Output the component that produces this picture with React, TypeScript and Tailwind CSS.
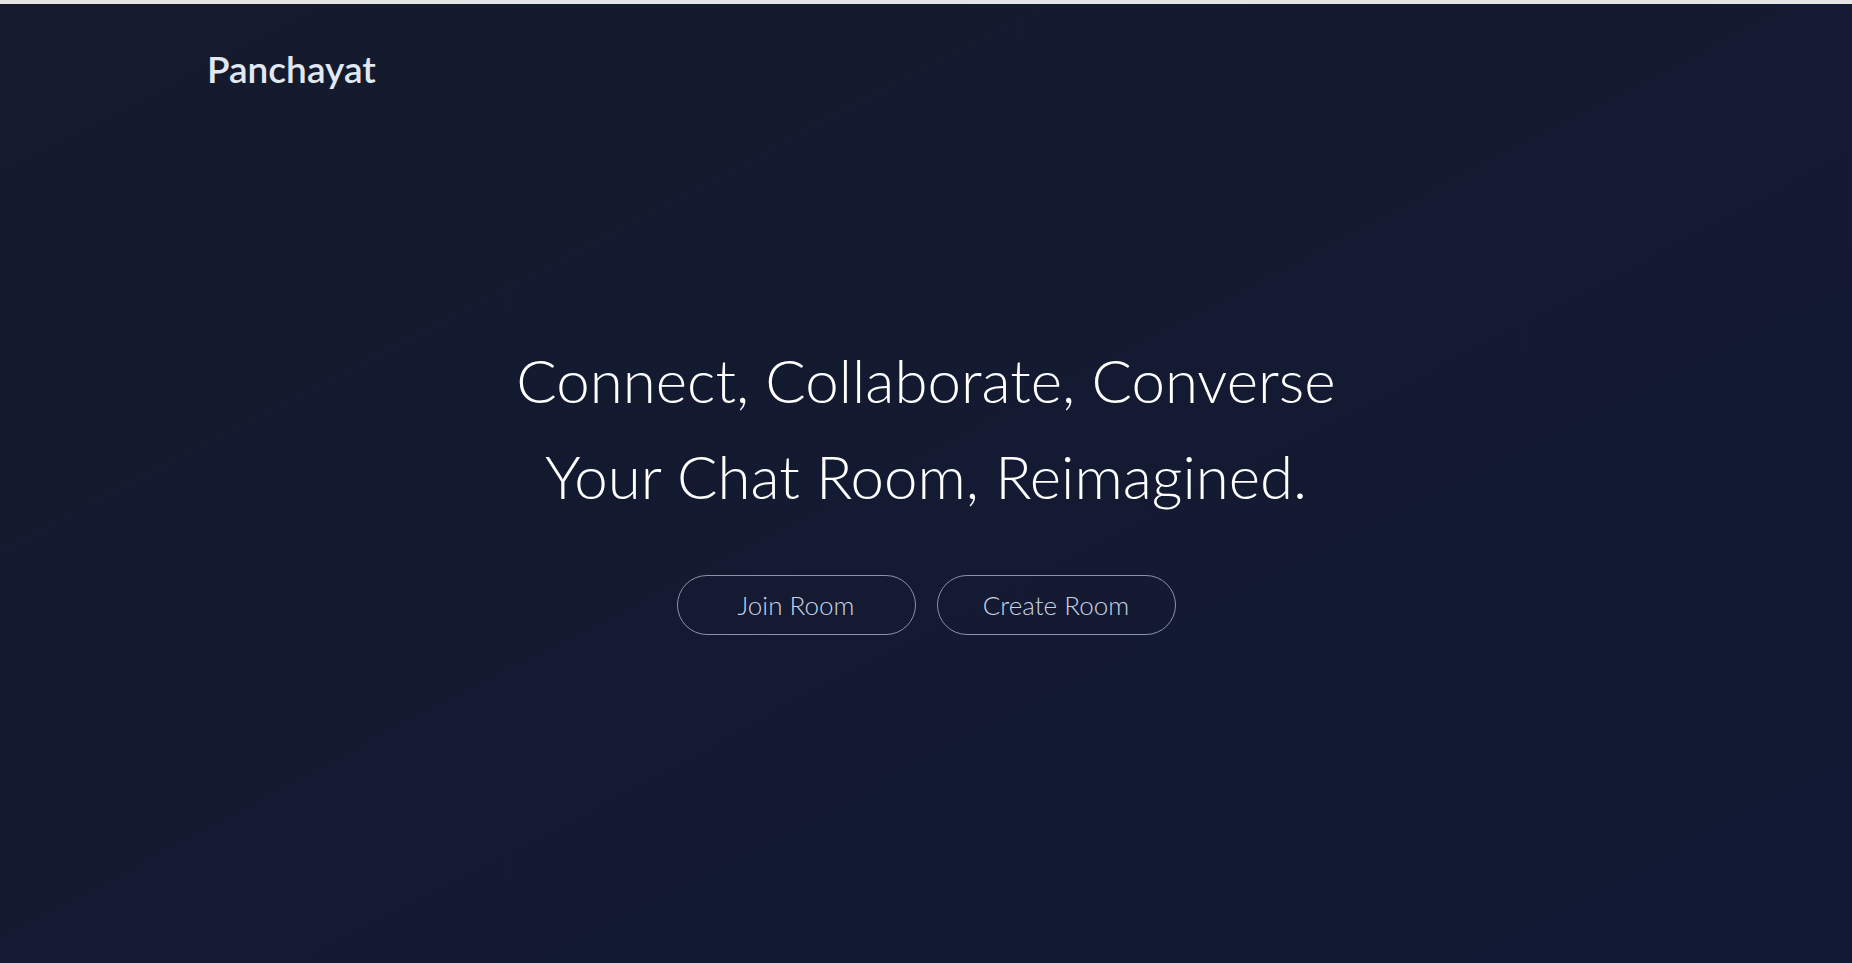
export default function App() {
  return (
    <div className="flex h-screen w-full flex-col overflow-hidden bg-[#141b2f]">
      <div className="h-[4px] w-full shrink-0 bg-[#e4e4e4]" />
      <div className="flex min-h-0 flex-1 flex-col bg-linear-to-br from-[#151b2c] via-[#131a31] to-[#121934]">
        <header className="flex h-[130px] shrink-0 items-center pl-[207px]">
          <span className="font-['Lato',sans-serif] text-[37px] font-semibold text-[#e1e8f2]">
            Panchayat
          </span>
        </header>

        <main className="flex flex-1 flex-col items-center justify-center pb-[130px]">
          <h1 className="text-center font-['Lato',sans-serif] text-[60px] font-light leading-[1.6] text-white">
            Connect, Collaborate, Converse
            <br />
            Your Chat Room, Reimagined.
          </h1>

          <div className="mt-[51px] flex gap-[21px]">
            <button className="flex h-[60px] w-[239px] items-center justify-center rounded-full border border-[#8a93a8] font-['Lato',sans-serif] text-[26px] font-light text-[#c9d4e6]">
              Join Room
            </button>
            <button className="flex h-[60px] w-[239px] items-center justify-center rounded-full border border-[#8a93a8] font-['Lato',sans-serif] text-[26px] font-light text-[#c9d4e6]">
              Create Room
            </button>
          </div>
        </main>
      </div>
    </div>
  );
}
